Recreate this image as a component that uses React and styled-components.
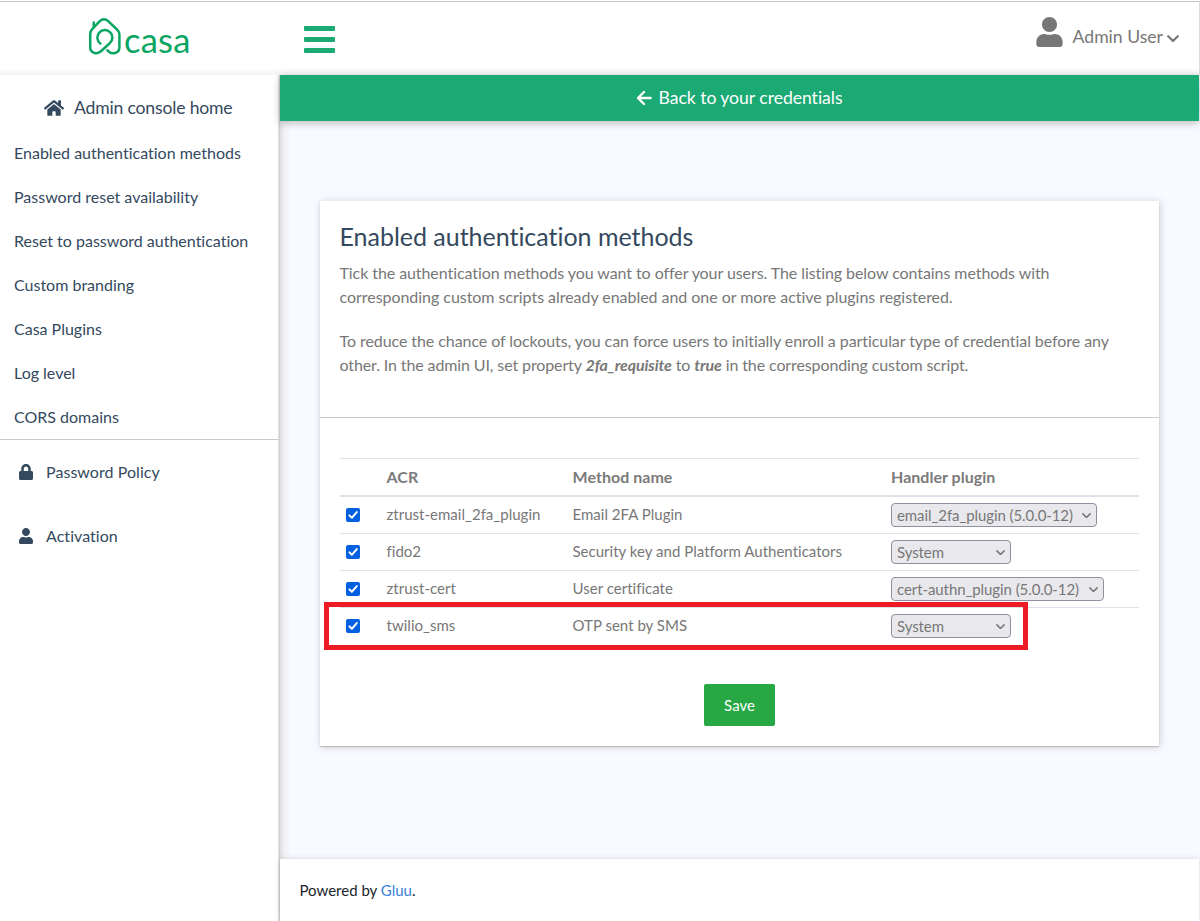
import React from "react";
import styled, { createGlobalStyle } from "styled-components";
import { FaHome, FaUser, FaLock } from "react-icons/fa";

const GlobalStyle = createGlobalStyle`
  *, *::before, *::after { box-sizing: border-box; }
  body {
    margin: 0;
    background: #fff;
    color: #777;
    font: 400 16px/1.5 Lato, "Liberation Sans", sans-serif;
    font-variant-ligatures: none;
  }
  h1, p { margin: 0; font-weight: 400; }
`;

const Page = styled.div`
  display: flex;
  flex-direction: column;
  height: 921px;
  overflow: hidden;
  padding-top: 1px;
`;

const Header = styled.header`
  display: flex;
  flex: none;
  height: 74px;
  border-top: 1px solid #c9c9c9;
  border-right: 1px solid #dcdcdc;
  background: linear-gradient(#fff 66px, #f4f4f4 73px);
`;

const Brand = styled.div`
  display: flex;
  width: 280px;
  padding: 14px 0 0 88px;
  color: #0aa562;
`;

const Wordmark = styled.span`
  margin: 3px 0 0 2px;
  font-size: 34.5px;
  line-height: 41px;
  letter-spacing: 0.25px;
`;

const MenuButton = styled.button`
  display: flex;
  flex-direction: column;
  gap: 6px;
  width: 31px;
  margin: 24px 0 0 24px;
  padding: 0;
  border: 0;
  background: none;
`;

const MenuBar = styled.span`
  height: 5px;
  border-radius: 1px;
  background: #1ba974;
`;

const Account = styled.div`
  display: flex;
  margin-left: auto;
  padding: 15px 20px 0 0;
  font-size: 17.6px;
  line-height: 40px;
  svg { flex: none; }
`;

const AccountIcon = styled(FaUser)`
  width: 27px;
  height: 30px;
`;

const AccountName = styled.span`
  margin: 0 4px 0 10px;
`;

const ChevronSlot = styled.span`
  display: flex;
  align-items: center;
  height: 43px;
`;

const Body = styled.div`
  display: flex;
  flex: 1;
  min-height: 0;
`;

const Sidebar = styled.nav`
  position: relative;
  z-index: 1;
  width: 279px;
  flex: none;
  border-right: 1px solid #e3e3e3;
  background: #fff;
  color: #34495e;
`;

const HomeLink = styled.a`
  display: flex;
  align-items: center;
  gap: 10px;
  height: 56px;
  padding: 9px 0 0 44px;
  font-size: 17.6px;
  line-height: 28px;
  letter-spacing: -0.18px;
`;

const NavList = styled.div`
  height: 309px;
  border-bottom: 1px solid #c6cac8;
`;

const NavLink = styled.a`
  display: block;
  height: 44px;
  padding-left: 14px;
  line-height: 44px;
`;

const IconLink = styled.a`
  display: flex;
  align-items: center;
  gap: 12px;
  height: 64px;
  padding-left: 18px;
  letter-spacing: 0.05px;
`;

const Main = styled.main`
  position: relative;
  z-index: 2;
  display: flex;
  flex: 1;
  flex-direction: column;
  border-left: 1px solid #d2d2d6;
  padding-right: 1px;
  background: linear-gradient(90deg, #dcdce1 0, #f0f1f5 4px, #f9faff 11px);
`;

const Banner = styled.a`
  display: flex;
  align-items: center;
  justify-content: center;
  gap: 7px;
  height: 46px;
  flex: none;
  padding: 0 1px 0 0;
  background: #1ba974;
  box-shadow: 0 2px 8px rgba(0, 0, 0, 0.25);
  color: #fff;
  font-size: 17.6px;
  line-height: 26px;
  letter-spacing: -0.04px;
`;

const Card = styled.section`
  width: 839px;
  height: 545px;
  flex: none;
  margin: 80px 0 0 40px;
  background: #fff;
  box-shadow: 0 1px 1px rgba(0, 0, 0, 0.16), 1px 1px 8px rgba(0, 0, 0, 0.18);
`;

const Intro = styled.div`
  height: 217px;
  padding: 19px 0 0 19.5px;
  border-bottom: 1px solid #cacaca;
`;

const Title = styled.h1`
  margin-bottom: 9px;
  color: #34495e;
  font-size: 25px;
  line-height: 32px;
  letter-spacing: -0.02px;
`;

const Paragraph = styled.p`
  margin-bottom: 20px;
  white-space: nowrap;
`;

const Line = styled.span`
  display: block;
  letter-spacing: ${(p) => p.$track}px;
`;

const TableArea = styled.div`
  padding: 40px 20px 0 20px;
`;

const Row = styled.div`
  display: grid;
  grid-template-columns: 46.5px 186px 318.5px 1fr;
  align-items: center;
  height: 37px;
  border-top: 1px solid #dee2e6;
  font-size: 15px;
  white-space: nowrap;
`;

const HeadRow = styled(Row)`
  font-size: 16px;
  font-weight: 700;
  color: #7b7b7b;
  letter-spacing: 0.03px;
`;

const FirstRow = styled(Row)`
  height: 38px;
  border-top-width: 2px;
`;

const Cell = styled.span`
  padding-bottom: 2px;
  letter-spacing: 0.02px;
`;

const CheckMark = styled.span`
  display: flex;
  width: 14px;
  height: 14px;
  margin-left: 6px;
  border-radius: 2px;
  background: #0060df;
`;

const Picker = styled.span`
  display: flex;
  align-items: center;
  justify-content: space-between;
  width: ${(p) => p.$width}px;
  height: 24px;
  padding: 1px 5px 0 5px;
  border: 1px solid #8f8f9d;
  border-radius: 4px;
  background: #e9e9ed;
  letter-spacing: -0.08px;
`;

const Highlight = styled.div`
  position: absolute;
  z-index: 3;
  top: 527px;
  left: 44px;
  width: 704px;
  height: 48px;
  border: 5px solid #ed1c24;
`;

const SaveButton = styled.button`
  display: block;
  width: 71px;
  height: 42px;
  margin: 40px auto 0;
  padding: 0;
  border: 0;
  border-radius: 2px;
  background: #28a745;
  color: #fff;
  font: 400 15px/42px Lato, sans-serif;
`;

const Footer = styled.footer`
  height: 62px;
  margin-top: auto;
  padding: 20px 19.5px;
  background: #fff;
  box-shadow: 0 0 6px rgba(0, 0, 0, 0.15);
  color: #212529;
  font-size: 15px;
`;

const FooterLink = styled.a`
  color: #3a82d8;
`;

const HouseLogo = () => (
  <svg width="34" height="42" viewBox="0 0 34 42" fill="none" stroke="currentColor" strokeWidth="2.5" strokeLinecap="round" strokeLinejoin="round">
    <path d="M19.4 34.2 C23.5 39.4 31.4 37.4 31.4 31.5 V18.6 Q31.4 16 29.5 14 L20.2 5.1 Q16 1.3 11.8 5.1 L4.2 13.1 Q2.2 15.2 2.2 18.2 V31.2 C2.2 36.8 9 39.2 13 35.2 L21.7 27.3 A7.5 7.5 0 1 0 12.3 27.5" />
    <path d="M5.8 11.2 V6.5" />
  </svg>
);

const Chevron = ({ size = 9, weight = 1.7 }) => (
  <svg width={size} height={size * 0.62} viewBox="0 0 10 6.2" fill="none" stroke="currentColor" strokeWidth={weight} strokeLinecap="round" strokeLinejoin="round">
    <path d="M1 1 L5 5 L9 1" />
  </svg>
);

const ArrowLeft = () => (
  <svg width="16" height="16" viewBox="0 0 16 16" fill="none" stroke="currentColor" strokeWidth="2.4" strokeLinecap="round" strokeLinejoin="round">
    <path d="M8 2 L2 8 L8 14 M2 8 H14.6" />
  </svg>
);

const Tick = () => (
  <svg width="14" height="14" viewBox="0 0 14 14" fill="none" stroke="#fff" strokeWidth="2" strokeLinecap="round" strokeLinejoin="round">
    <path d="M3.4 7.4 L5.8 9.8 L10.8 4.1" />
  </svg>
);

const links = [
  "Enabled authentication methods",
  "Password reset availability",
  "Reset to password authentication",
  "Custom branding",
  "Casa Plugins",
  "Log level",
  "CORS domains",
];

const methods = [
  { acr: "ztrust-email_2fa_plugin", name: "Email 2FA Plugin", plugin: "email_2fa_plugin (5.0.0-12)", width: 206 },
  { acr: "fido2", name: "Security key and Platform Authenticators", plugin: "System", width: 120 },
  { acr: "ztrust-cert", name: "User certificate", plugin: "cert-authn_plugin (5.0.0-12)", width: 213 },
  { acr: "twilio_sms", name: "OTP sent by SMS", plugin: "System", width: 120 },
];

export default function App() {
  return (
    <Page>
      <GlobalStyle />
      <Header>
        <Brand>
          <HouseLogo />
          <Wordmark>casa</Wordmark>
        </Brand>
        <MenuButton aria-label="Menu">
          <MenuBar />
          <MenuBar />
          <MenuBar />
        </MenuButton>
        <Account>
          <AccountIcon />
          <AccountName>Admin User</AccountName>
          <ChevronSlot>
            <Chevron size={12} weight={1.8} />
          </ChevronSlot>
        </Account>
      </Header>
      <Body>
        <Sidebar>
          <HomeLink>
            <FaHome size={20} />
            Admin console home
          </HomeLink>
          <NavList>
            {links.map((label) => (
              <NavLink key={label}>{label}</NavLink>
            ))}
          </NavList>
          <IconLink>
            <FaLock size={16} />
            Password Policy
          </IconLink>
          <IconLink>
            <FaUser size={16} />
            Activation
          </IconLink>
        </Sidebar>
        <Main>
          <Banner>
            <ArrowLeft />
            Back to your credentials
          </Banner>
          <Card>
            <Intro>
              <Title>Enabled authentication methods</Title>
              <Paragraph>
                <Line $track={-0.075}>
                  Tick the authentication methods you want to offer your users. The listing below contains methods with
                </Line>
                <Line $track={-0.04}>
                  corresponding custom scripts already enabled and one or more active plugins registered.
                </Line>
              </Paragraph>
              <Paragraph>
                <Line $track={-0.07}>
                  To reduce the chance of lockouts, you can force users to initially enroll a particular type of credential before any
                </Line>
                <Line $track={-0.115}>
                  other. In the admin UI, set property <b><i>2fa_requisite</i></b> to <b><i>true</i></b> in the corresponding custom script.
                </Line>
              </Paragraph>
            </Intro>
            <TableArea>
              <HeadRow>
                <span />
                <span>ACR</span>
                <span>Method name</span>
                <span>Handler plugin</span>
              </HeadRow>
              {methods.map((m, i) => {
                const MethodRow = i === 0 ? FirstRow : Row;
                return (
                  <MethodRow key={m.acr}>
                    <CheckMark><Tick /></CheckMark>
                    <Cell>{m.acr}</Cell>
                    <Cell>{m.name}</Cell>
                    <Picker $width={m.width}>
                      {m.plugin}
                      <Chevron />
                    </Picker>
                  </MethodRow>
                );
              })}
              <SaveButton>Save</SaveButton>
            </TableArea>
          </Card>
          <Highlight />
          <Footer>
            Powered by <FooterLink>Gluu</FooterLink>.
          </Footer>
        </Main>
      </Body>
    </Page>
  );
}
